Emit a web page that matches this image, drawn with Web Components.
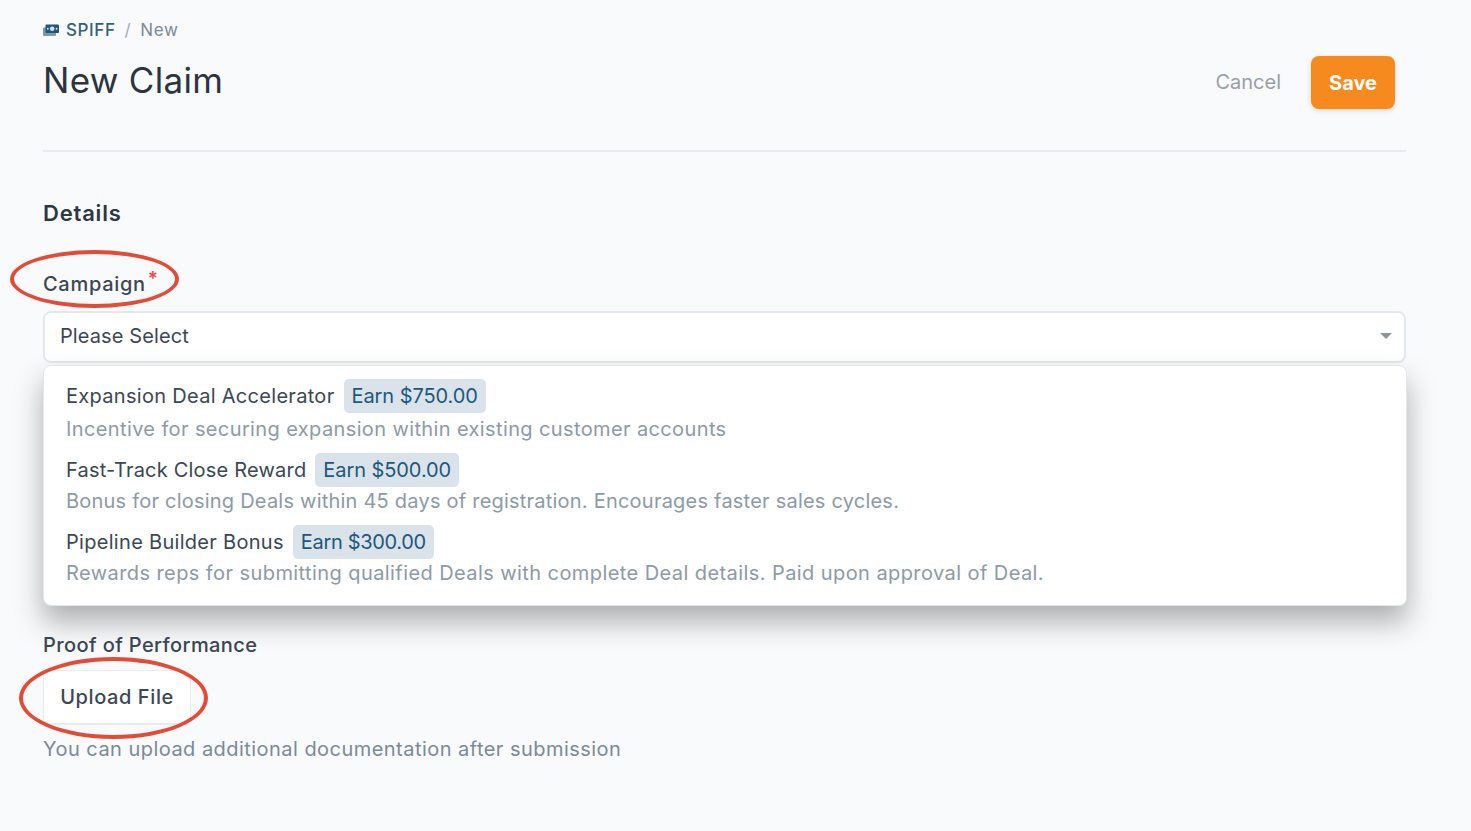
<!DOCTYPE html>
<html lang="en">
<head>
<meta charset="utf-8">
<title>New Claim</title>
<style>
  html, body { margin: 0; height: 100%; }
  body {
    background: #f9fafc;
    font-family: Inter, "Liberation Sans", sans-serif;
    overflow: hidden;
  }
</style>
</head>
<body>
<claim-page>
  <page-header slot="header" heading="New Claim" section="SPIFF" current="New"></page-header>

  <h2 slot="section">Details</h2>

  <form-field slot="campaign" label="Campaign" required style="--label-gap:14px;--label-track:.7px">
    <select-box placeholder="Please Select">
      <option-item name="Expansion Deal Accelerator" earn="Earn $750.00" style="--desc-track:.38px;--desc-pad:2px;--earn-track:-.08px">Incentive for securing expansion within existing customer accounts</option-item>
      <option-item name="Fast-Track Close Reward" earn="Earn $500.00" style="--desc-track:.22px;--name-track:.2px;--earn-track:-.08px">Bonus for closing Deals within 45 days of registration. Encourages faster sales cycles.</option-item>
      <option-item name="Pipeline Builder Bonus" earn="Earn $300.00" style="--desc-track:.42px;--earn-track:-.33px">Rewards reps for submitting qualified Deals with complete Deal details. Paid upon approval of Deal.</option-item>
    </select-box>
  </form-field>

  <form-field slot="proof" label="Proof of Performance" style="--label-gap:12px;--label-track:.4px">
    <upload-button>Upload File</upload-button>
    <span slot="help">You can upload additional documentation after submission</span>
  </form-field>

  <ring-mark slot="marks" style="left:10px;top:250px;width:169px;height:58px"></ring-mark>
  <ring-mark slot="marks" style="left:19px;top:657px;width:189px;height:82px"></ring-mark>
</claim-page>

<script>
class ClaimPage extends HTMLElement {
  constructor() {
    super();
    this.attachShadow({ mode: "open" });
    this.shadowRoot.innerHTML = `
      <style>
        :host { display: block; position: relative; height: 831px; box-sizing: border-box; padding: 20px 65px 0 43px; }
        .section { margin-top: 46px; }
        ::slotted(h2) {
          margin: 0; font-size: 22px; line-height: 30px; font-weight: 600; color: #2d3745; letter-spacing: .8px;
        }
        .campaign { margin-top: 43px; }
        /* the open list lies over the page, so the next field keeps its distance */
        .proof { margin-top: 269px; }
      </style>
      <slot name="header"></slot>
      <div class="section"><slot name="section"></slot></div>
      <div class="campaign"><slot name="campaign"></slot></div>
      <div class="proof"><slot name="proof"></slot></div>
      <slot name="marks"></slot>
    `;
  }
}
customElements.define("claim-page", ClaimPage);

class PageHeader extends HTMLElement {
  constructor() {
    super();
    this.attachShadow({ mode: "open" });
    this.shadowRoot.innerHTML = `
      <style>
        :host { display: block; border-bottom: 2px solid #e9ebef; height: 132px; box-sizing: border-box; }
        .crumbs { display: flex; align-items: center; height: 20px; font-size: 17px; letter-spacing: .6px; color: #7c8b9c; }
        .crumbs svg { width: 16px; height: 12px; margin: 0 7px 0 0; }
        .root { color: #33617f; font-weight: 500; }
        .sep { margin: 0 9px; color: #a0abb8; }
        .bar { display: flex; justify-content: space-between; align-items: flex-start; padding-right: 11px; }
        h1 { margin: 18px 0 0; font-size: 35px; line-height: 44px; font-weight: 400; color: #2b3440; letter-spacing: .3px; }
        .actions { display: flex; align-items: center; gap: 30px; margin-top: 16px; }
        .cancel { font-size: 20px; color: #98a0a9; padding-bottom: 2px; }
        .save {
          width: 84px; height: 53px; border-radius: 8px; background: #f78a1f; color: #fff;
          display: flex; align-items: center; justify-content: center;
          font-size: 20px; font-weight: 700; box-shadow: 0 2px 5px rgba(60,60,60,.16);
        }
      </style>
      <div class="crumbs">
        <svg viewBox="0 0 16 12">
          <rect x="0" y="3.5" width="13" height="8.5" rx="1" fill="#7f98ad"/>
          <rect x="2.5" y="0.5" width="13.5" height="8.5" rx="1" fill="#1f5879"/>
          <circle cx="9.2" cy="4.7" r="2.3" fill="#d5e2ec"/>
          <rect x="4" y="3.8" width="1.6" height="1.8" fill="#d5e2ec"/>
          <rect x="12.8" y="3.8" width="1.6" height="1.8" fill="#d5e2ec"/>
        </svg>
        <span class="root">${this.getAttribute("section")}</span>
        <span class="sep">/</span>
        <span>${this.getAttribute("current")}</span>
      </div>
      <div class="bar">
        <h1>${this.getAttribute("heading")}</h1>
        <div class="actions">
          <span class="cancel">Cancel</span>
          <span class="save">Save</span>
        </div>
      </div>
    `;
  }
}
customElements.define("page-header", PageHeader);

class FormField extends HTMLElement {
  constructor() {
    super();
    this.attachShadow({ mode: "open" });
    const star = this.hasAttribute("required") ? `<sup>*</sup>` : "";
    this.shadowRoot.innerHTML = `
      <style>
        :host { display: block; }
        label {
          display: block; font-size: 20px; line-height: 26px; font-weight: 500; color: #3c4755;
          margin-bottom: var(--label-gap, 12px); letter-spacing: var(--label-track, 0);
        }
        sup { color: #ea4c3d; font-size: 19px; font-weight: 600; line-height: 0; margin-left: 2px; vertical-align: 6px; }
        .help { display: block; margin-top: 11px; font-size: 20px; line-height: 26px; color: #7b8a9b; letter-spacing: .46px; }
      </style>
      <label>${this.getAttribute("label")}${star}</label>
      <slot></slot>
      <div class="help"><slot name="help"></slot></div>
    `;
  }
}
customElements.define("form-field", FormField);

class SelectBox extends HTMLElement {
  constructor() {
    super();
    this.attachShadow({ mode: "open" });
    this.shadowRoot.innerHTML = `
      <style>
        :host { display: block; position: relative; }
        .control {
          height: 52px; box-sizing: border-box; padding: 0 12px 2px 15px; background: #fff;
          border: 2px solid #e4e8ee; border-radius: 8px;
          display: flex; align-items: center; justify-content: space-between;
          font-size: 20px; color: #3c4755; letter-spacing: .1px;
        }
        .caret { width: 0; height: 0; border: 6px solid transparent; border-top: 6px solid #8f959c; border-bottom: 0; }
        .menu {
          position: absolute; left: 0; right: -1px; top: 54px; height: 241px;
          box-sizing: border-box; padding: 13px 22px; background: #fff;
          border: 1px solid #e4e6ea; border-radius: 8px;
          box-shadow: 0 16px 28px rgba(30,30,30,.34);
          display: flex; flex-direction: column; gap: 10px;
        }
      </style>
      <div class="control"><span>${this.getAttribute("placeholder")}</span><span class="caret"></span></div>
      <div class="menu"><slot></slot></div>
    `;
  }
}
customElements.define("select-box", SelectBox);

class OptionItem extends HTMLElement {
  constructor() {
    super();
    this.attachShadow({ mode: "open" });
    this.shadowRoot.innerHTML = `
      <style>
        :host { display: block; }
        .top { display: flex; align-items: center; gap: 9px; height: 34px; font-size: 20px; color: #3c4755; }
        .name { letter-spacing: var(--name-track, .3px); }
        .earn {
          height: 34px; padding: 0 8px; display: flex; align-items: center; background: #dbe3ea;
          border-radius: 5px; color: #20587c; letter-spacing: var(--earn-track, 0);
        }
        .desc {
          padding-top: var(--desc-pad, 0); font-size: 20px; line-height: 28px; color: #8d9aa9;
          white-space: nowrap; letter-spacing: var(--desc-track, .35px);
        }
      </style>
      <div class="top"><span class="name">${this.getAttribute("name")}</span><span class="earn">${this.getAttribute("earn")}</span></div>
      <div class="desc"><slot></slot></div>
    `;
  }
}
customElements.define("option-item", OptionItem);

class UploadButton extends HTMLElement {
  constructor() {
    super();
    this.attachShadow({ mode: "open" });
    this.shadowRoot.innerHTML = `
      <style>
        :host {
          display: flex; align-items: center; justify-content: center;
          width: 148px; height: 55px; box-sizing: border-box; background: #fff;
          border: 1px solid #e9ebef; border-bottom-width: 2px; border-radius: 6px;
          font-size: 20px; font-weight: 500; color: #3c4755; letter-spacing: .6px;
        }
      </style>
      <slot></slot>
    `;
  }
}
customElements.define("upload-button", UploadButton);

class RingMark extends HTMLElement {
  constructor() {
    super();
    this.attachShadow({ mode: "open" });
    this.shadowRoot.innerHTML = `
      <style>
        :host { display: block; position: absolute; box-sizing: border-box; border: 4px solid #e24b37; border-radius: 50%; pointer-events: none; }
      </style>
    `;
  }
}
customElements.define("ring-mark", RingMark);
</script>
</body>
</html>
